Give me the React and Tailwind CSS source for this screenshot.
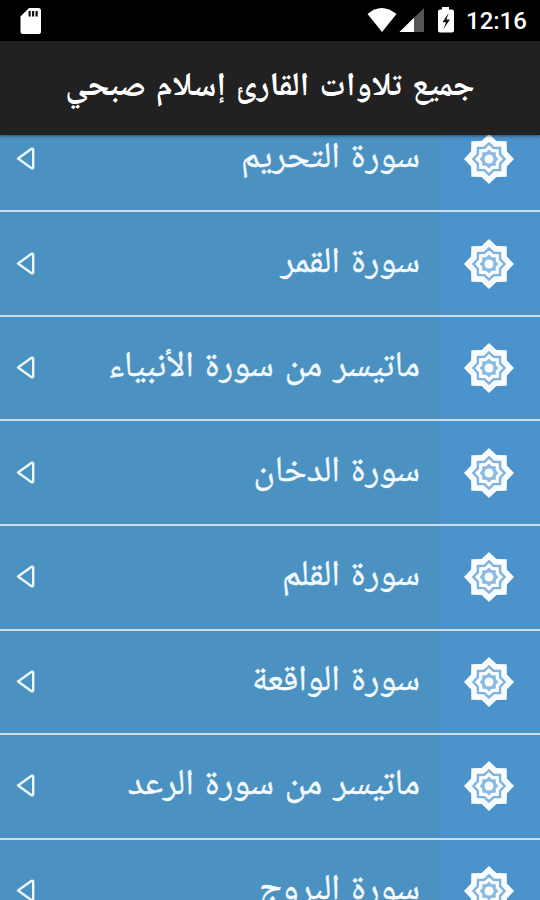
const titles = [
  'سورة التحريم',
  'سورة القمر',
  'ماتيسر من سورة الأنبياء',
  'سورة الدخان',
  'سورة القلم',
  'سورة الواقعة',
  'ماتيسر من سورة الرعد',
  'سورة البروج',
];

// Eight-pointed star outline made of two overlapping squares
function starPoints(r) {
  const pts = [];
  for (let i = 0; i < 16; i++) {
    const radius = i % 2 === 0 ? r : r * 0.775;
    const a = (i * Math.PI) / 8;
    pts.push(`${(radius * Math.sin(a)).toFixed(2)},${(-radius * Math.cos(a)).toFixed(2)}`);
  }
  return pts.join(' ');
}

function Star() {
  return (
    <svg className="h-[52px] w-[52px]" viewBox="-26 -26 52 52">
      <polygon points={starPoints(25)} fill="#f8fcff" />
      <polygon points={starPoints(15.6)} fill="none" stroke="#7fb3de" strokeWidth="2.4" />
      <polygon points={starPoints(8.6)} fill="#8bbae1" stroke="#8bbae1" strokeWidth="1.2" />
      <circle r="4.5" fill="#f8fcff" />
    </svg>
  );
}

function Arrow() {
  return (
    <svg className="ml-[16px] h-[26px] w-[20px] shrink-0" viewBox="0 0 20 26" fill="none" stroke="#eef8ff" strokeWidth="2.4" strokeLinejoin="round">
      <path d="M2 12.500 L15.600 2.800 Q17.200 2.100 17.200 3.700 V21.300 Q17.200 22.900 15.600 22.200 Z" />
    </svg>
  );
}

function Row({ title }) {
  return (
    <div className="flex h-[104.6px] shrink-0 items-stretch border-b-[2.6px] border-[#cbdeec] bg-[#4b92c2]">
      <div className="flex flex-1 items-center justify-between pr-[20px]">
        <Arrow />
        <span
          dir="rtl"
          className="whitespace-nowrap font-['Noto_Naskh_Arabic_UI','Noto_Naskh_Arabic','Noto_Sans_Arabic','DejaVu_Sans',sans-serif] text-[36px] leading-[46px] text-[#f4faff] [-webkit-text-stroke:0.4px_#f4faff] [word-spacing:3px]"
        >
          {title}
        </span>
      </div>
      <div className="flex w-[100px] items-center justify-center bg-[#4c92cb] pr-[2px]">
        <Star />
      </div>
    </div>
  );
}

function StatusBar() {
  return (
    <div className="flex h-[41px] shrink-0 items-center justify-between bg-black">
      <svg className="h-[41px] w-[60px]" viewBox="0 0 60 41">
        <path d="M29 8 H38.500 Q41 8 41 10.500 V31.500 Q41 34 38.500 34 H23 Q20.500 34 20.500 31.500 V16.500 Z" fill="#fff" />
        <path d="M28.500 11 h2.200 v5.500 h-2.200z M32 11 h2.200 v5.500 h-2.200z M35.500 11 h2.200 v5.500 h-2.200z" fill="#111" />
      </svg>
      <div className="flex h-full items-center">
        <svg className="h-[41px] w-[100px]" viewBox="0 0 100 41">
          <path d="M1.500 14 Q15.500 2 30.500 14 L16 32 Z" fill="#fff" />
          <path d="M33.500 32 L58 8 V32 Z" fill="#555" />
          <path d="M33.500 32 L48 17.800 V32 Z" fill="#fff" />
          <path d="M76 7 H83 V9.500 H86 Q88 9.500 88 11.500 V30.500 Q88 32.500 86 32.500 H74 Q72 32.500 72 30.500 V11.500 Q72 9.500 74 9.500 H76 Z" fill="#fff" />
          <path d="M82.500 13 L76.500 22.200 H80 L77.500 29 L84 19.500 H80.500 Z" fill="#111" />
        </svg>
        <span className="w-[74px] pt-[2px] font-['Roboto',sans-serif] text-[24px] font-medium leading-[39px] text-white">12:16</span>
      </div>
    </div>
  );
}

export default function App() {
  return (
    <div className="flex h-[900px] w-[540px] flex-col overflow-hidden bg-[#4b92c2]">
      <StatusBar />
      <div className="z-10 flex h-[94px] shrink-0 items-center justify-center bg-[#212121] shadow-[0_1px_3px_rgba(0,0,0,0.5)]">
        <h1
          dir="rtl"
          className="whitespace-nowrap font-['Noto_Naskh_Arabic_UI','Noto_Naskh_Arabic','Noto_Sans_Arabic','DejaVu_Sans',sans-serif] text-[33px] leading-[46px] font-bold text-white [word-spacing:3px]"
        >
          جميع تلاوات القارئ إسلام صبحي
        </h1>
      </div>
      <div className="min-h-0 flex-1 overflow-hidden">
        <div className="-mt-[27.400px] flex flex-col">
          {titles.map((title) => (
            <Row key={title} title={title} />
          ))}
        </div>
      </div>
    </div>
  );
}
